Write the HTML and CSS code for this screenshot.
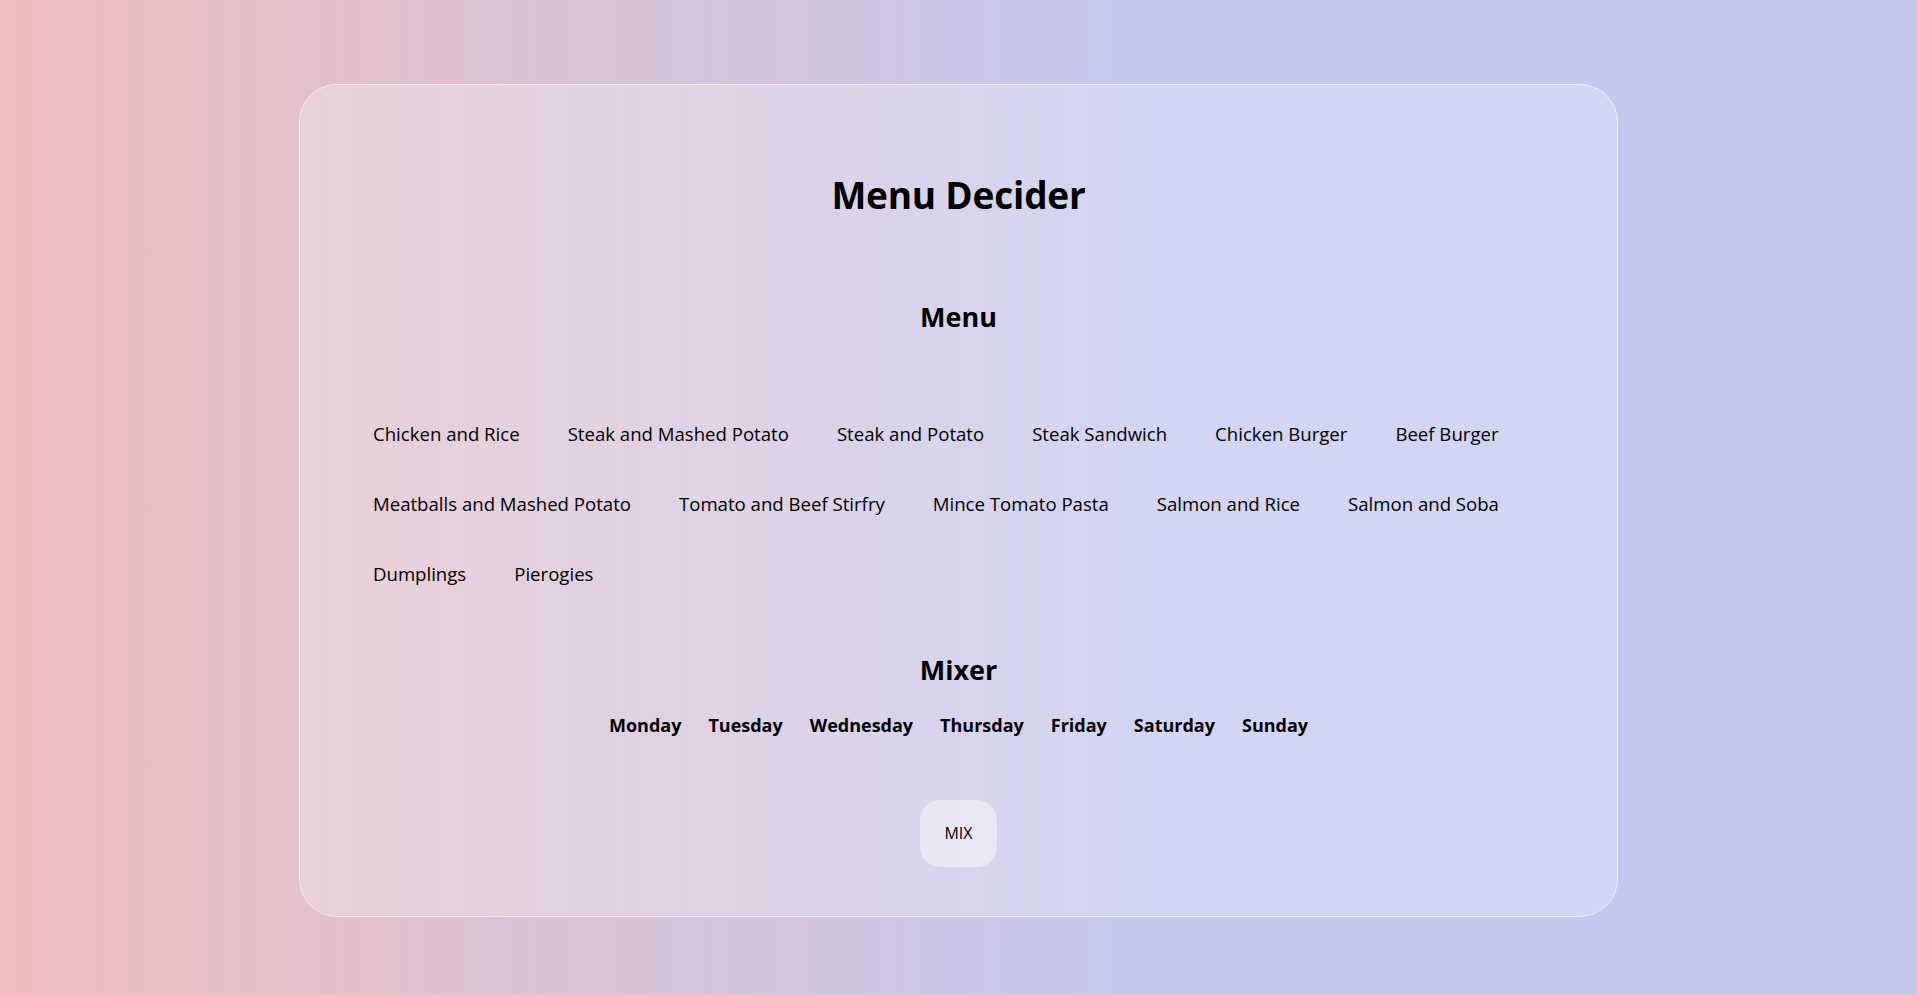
FILE: index.html
```html
<!DOCTYPE html>
<html lang="en">
<head>
<meta charset="utf-8">
<title>Menu Decider</title>
<link rel="stylesheet" href="styles.css">
</head>
<body>
<main class="card">
  <h1 class="title">Menu Decider</h1>
  <section class="menu">
    <h2 class="section-title">Menu</h2>
    <ul class="dish-list">
      <li class="dish">Chicken and Rice</li>
      <li class="dish">Steak and Mashed Potato</li>
      <li class="dish">Steak and Potato</li>
      <li class="dish">Steak Sandwich</li>
      <li class="dish">Chicken Burger</li>
      <li class="dish">Beef Burger</li>
      <li class="dish">Meatballs and Mashed Potato</li>
      <li class="dish">Tomato and Beef Stirfry</li>
      <li class="dish">Mince Tomato Pasta</li>
      <li class="dish">Salmon and Rice</li>
      <li class="dish">Salmon and Soba</li>
      <li class="dish">Dumplings</li>
      <li class="dish">Pierogies</li>
    </ul>
  </section>
  <section class="mixer">
    <h2 class="section-title mixer-title">Mixer</h2>
    <ul class="days">
      <li class="day">Monday</li>
      <li class="day">Tuesday</li>
      <li class="day">Wednesday</li>
      <li class="day">Thursday</li>
      <li class="day">Friday</li>
      <li class="day">Saturday</li>
      <li class="day">Sunday</li>
    </ul>
    <button class="mix-btn" type="button">MIX</button>
  </section>
</main>
</body>
</html>
```
FILE: styles.css
```css
* {
  box-sizing: border-box;
}

html, body {
  margin: 0;
  padding: 0;
}

body {
  min-height: 100vh;
  font-family: "Open Sans", "Noto Sans", "Liberation Sans", sans-serif;
  color: #000;
  background: linear-gradient(90deg, #eebdbd 0%, #c4c8ee 60%, #c4c8ee 100%);
  padding: 84px 0 80px;
}

.card {
  width: 1319px;
  margin: 0 auto;
  border: 1.5px solid rgba(255, 255, 255, 0.55);
  border-radius: 38px;
  background: rgba(255, 255, 255, 0.25);
  padding: 87px 72px 49px;
  display: flex;
  flex-direction: column;
  align-items: center;
}

.title {
  margin: 0;
  font-size: 37px;
  line-height: 46px;
  font-weight: 700;
  letter-spacing: -0.2px;
}

.menu {
  width: 100%;
  display: flex;
  flex-direction: column;
  align-items: center;
  margin-top: 82px;
}

.section-title {
  margin: 0;
  font-size: 27px;
  line-height: 34px;
  font-weight: 700;
}

.dish-list {
  list-style: none;
  margin: 65px 0 0;
  padding: 0 0 0 1px;
  width: 100%;
  display: flex;
  flex-wrap: wrap;
  column-gap: 48px;
}

.dish {
  font-size: 18.6px;
  line-height: 22px;
  padding: 24px 0;
}

.mixer {
  display: flex;
  flex-direction: column;
  align-items: center;
  margin-top: 44px;
}

.days {
  list-style: none;
  margin: 26px 0 0;
  padding: 0;
  display: flex;
  column-gap: 27px;
}

.day {
  font-size: 18px;
  line-height: 24px;
  font-weight: 700;
}

.mix-btn {
  margin-top: 63px;
  font-family: inherit;
  font-size: 16px;
  line-height: 19px;
  color: #000;
  border: none;
  border-radius: 20px;
  background: rgba(255, 255, 255, 0.45);
  padding: 24px 24px;
  cursor: pointer;
}
```
